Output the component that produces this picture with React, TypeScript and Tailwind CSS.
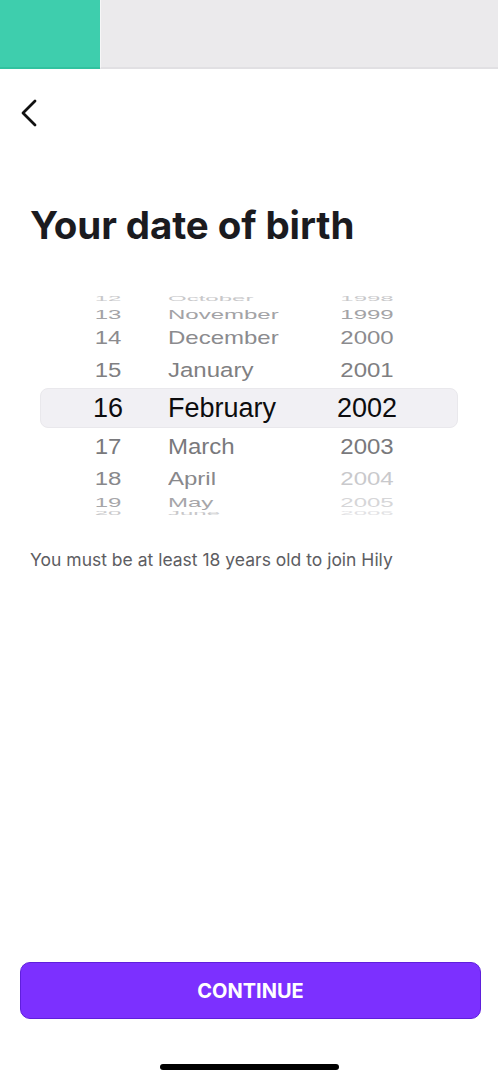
type Row = {
  day: string
  month: string
  year: string
  h: string
  scale: string
  color: string
  yearColor: string
}

// wheel rows, flattened at the edges like the iOS picker
const ROWS: Row[] = [
  { day: '12', month: 'October',  year: '1998', h: 'h-[14px]', scale: 'scale-y-[0.3]',  color: 'text-[#c8c8ca]', yearColor: 'text-[#c8c8ca]' },
  { day: '13', month: 'November', year: '1999', h: 'h-[17px]', scale: 'scale-y-[0.55]', color: 'text-[#a3a3a6]', yearColor: 'text-[#a3a3a6]' },
  { day: '14', month: 'December', year: '2000', h: 'h-[29px]', scale: 'scale-y-[0.76]', color: 'text-[#8b8b8e]', yearColor: 'text-[#8b8b8e]' },
  { day: '15', month: 'January',  year: '2001', h: 'h-[36px]', scale: 'scale-y-[0.88]', color: 'text-[#7f7f82]', yearColor: 'text-[#7f7f82]' },
]

const ROWS_BELOW: Row[] = [
  { day: '17', month: 'March', year: '2003', h: 'h-[35px]', scale: 'scale-y-[0.95]', color: 'text-[#79797c]', yearColor: 'text-[#79797c]' },
  { day: '18', month: 'April', year: '2004', h: 'h-[32px]', scale: 'scale-y-[0.8]',  color: 'text-[#88888b]', yearColor: 'text-[#c9c9cc]' },
  { day: '19', month: 'May',   year: '2005', h: 'h-[15px]', scale: 'scale-y-[0.55]', color: 'text-[#a6a6a9]', yearColor: 'text-[#d6d6d8]' },
  { day: '20', month: 'June',  year: '2006', h: 'h-[6px]',  scale: 'scale-y-[0.2]',  color: 'text-[#c8c8ca]', yearColor: 'text-[#e2e2e4]' },
]

function WheelRow({ row }: { row: Row }) {
  return (
    <div className={`flex items-center overflow-hidden pl-[24px] ${row.h}`}>
      <span className={`w-[88px] text-center text-[24px] leading-none ${row.scale} ${row.color}`}>{row.day}</span>
      <span className={`ml-[16px] w-[159px] text-[24px] leading-none origin-left ${row.scale} ${row.color}`}>{row.month}</span>
      <span className={`w-[80px] text-center text-[24px] leading-none ${row.scale} ${row.yearColor}`}>{row.year}</span>
    </div>
  )
}

export default function App() {
  return (
    <div className="flex h-[1080px] w-full flex-col bg-white font-['Inter',sans-serif]">
      <div className="flex h-[69px]">
        <div className="w-[100px] border-b-2 border-[#31c29f] bg-[#3ecead]" />
        <div className="flex-1 border-b-2 border-l border-[#e1e0e3] border-l-[#f6f6f7] bg-[#ebeaec]" />
      </div>

      <button type="button" aria-label="Back" className="ml-[18px] mt-[29px] h-[30px] w-[22px] text-[#111]">
        <svg width="22" height="30" viewBox="0 0 22 30" fill="none">
          <polyline points="17,3 5,15 17,27" stroke="currentColor" strokeWidth="2.8" strokeLinecap="round" strokeLinejoin="round" />
        </svg>
      </button>

      <h1 className="ml-[30px] mt-[74px] text-[38.5px] font-bold leading-[46px] tracking-[-0.1px] text-[#1b1b1f]">
        Your date of birth
      </h1>

      <div className="mx-[40px] mt-[44px] font-['Liberation_Sans',Arial,sans-serif]">
        {ROWS.map(r => <WheelRow key={r.day} row={r} />)}
        <div className="flex h-[40px] items-center rounded-[8px] border border-[#e9e8ec] bg-[#f1f0f4] pl-[23px]">
          <span className="w-[88px] text-center text-[27px] leading-none text-[#0c0c0e]">16</span>
          <span className="ml-[16px] w-[159px] text-[27px] leading-none text-[#0c0c0e]">February</span>
          <span className="w-[80px] text-center text-[27px] leading-none text-[#0c0c0e]">2002</span>
        </div>
        {ROWS_BELOW.map(r => <WheelRow key={r.day} row={r} />)}
      </div>

      <p className="ml-[30px] mt-[33px] text-[17.5px] leading-[22px] text-[#5d5d62]">
        You must be at least 18 years old to join Hily
      </p>

      <div className="flex-1" />

      <button
        type="button"
        className="ml-[20px] mr-[17px] flex h-[57px] items-center justify-center rounded-[10px] border border-[#5f1fdc] bg-[#7c30ff] text-[20px] font-bold text-white"
      >
        CONTINUE
      </button>

      <div className="flex h-[61px] items-end justify-center pb-[10px]">
        <div className="h-[6px] w-[179px] rounded-full bg-black" />
      </div>
    </div>
  )
}
